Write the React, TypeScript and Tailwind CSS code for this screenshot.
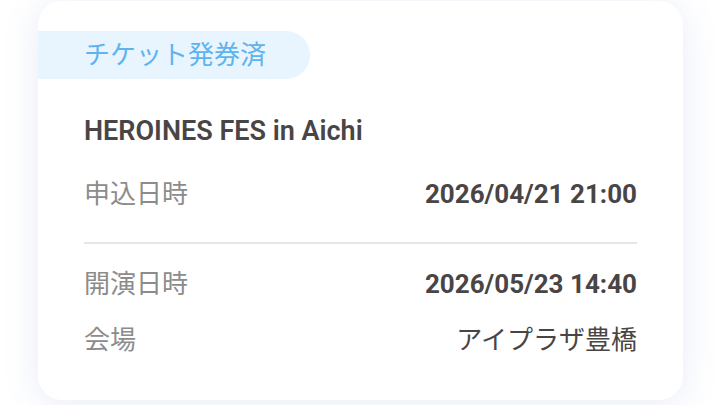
const font = { fontFamily: 'Roboto, "Noto Sans CJK JP", sans-serif' }

const rows = [
  { label: '開演日時', value: '2026/05/23 14:40', bold: true },
  { label: '会場', value: 'アイプラザ豊橋', bold: false },
]

export default function App() {
  return (
    <div className="h-[405px] w-[720px] overflow-hidden bg-white pl-[38px] pt-px" style={font}>
      <div className="w-[645px] h-[399px] rounded-[24px] bg-white shadow-[0_4px_36px_rgba(80,105,200,0.13)] pt-[30px]">
        <div className="flex h-[48px] w-[272px] items-center rounded-r-full bg-[#e8f5fe] pl-[46px]">
          <span className="text-[26px] leading-none text-[#5fb3ee]">チケット発券済</span>
        </div>

        <div className="px-[46px]">
          <h2 className="mt-[34px] text-[27px] font-semibold leading-[36px] text-[#4a4545]">
            HEROINES FES in Aichi
          </h2>

          <div className="mt-[27px] flex h-[36px] items-center justify-between">
            <span className="text-[26px] text-[#8c8c8c]">申込日時</span>
            <span className="text-[26px] font-bold text-[#4a4545]">2026/04/21 21:00</span>
          </div>

          <div className="mt-[30px] h-[2px] bg-[#e6e6e6]" />

          <div className="mt-[22px] flex flex-col gap-[20px]">
            {rows.map((r) => (
              <div key={r.label} className="flex h-[36px] items-center justify-between">
                <span className="text-[26px] text-[#8c8c8c]">{r.label}</span>
                <span className={`text-[26px] text-[#4a4545] ${r.bold ? 'font-bold' : ''}`}>{r.value}</span>
              </div>
            ))}
          </div>
        </div>
      </div>
    </div>
  )
}
